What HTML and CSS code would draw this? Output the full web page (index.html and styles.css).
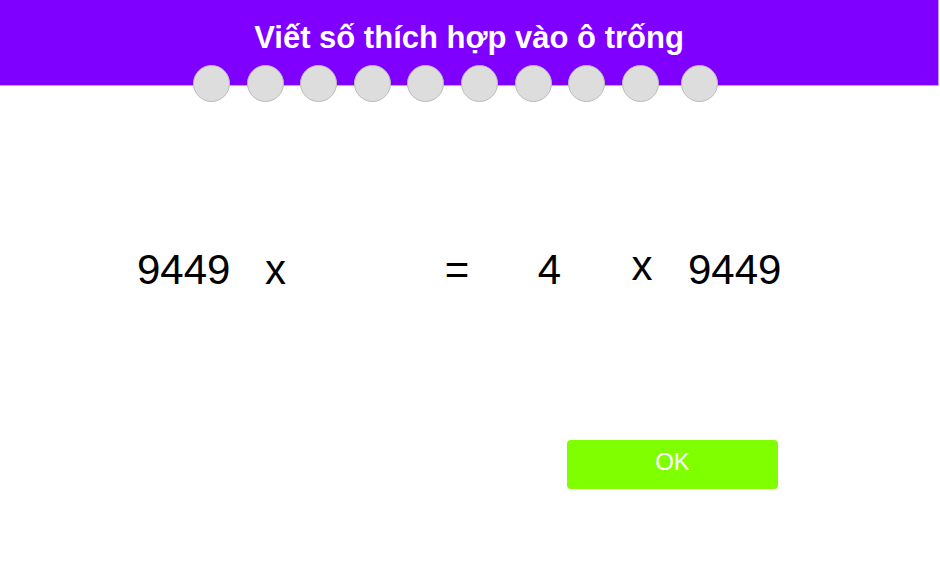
FILE: index.html
```html
<!DOCTYPE html>
<html lang="vi">
<head>
<meta charset="utf-8">
<title>Viết số thích hợp vào ô trống</title>
<link rel="stylesheet" href="styles.css">
</head>
<body>
  <header class="top">
    <h1 class="title">Viết số thích hợp vào ô trống</h1>
    <div class="dots">
      <span class="dot"></span>
      <span class="dot"></span>
      <span class="dot"></span>
      <span class="dot"></span>
      <span class="dot"></span>
      <span class="dot"></span>
      <span class="dot"></span>
      <span class="dot"></span>
      <span class="dot"></span>
      <span class="dot dot-last"></span>
    </div>
  </header>
  <main class="content">
    <div class="equation">
      <span class="cell">9449</span>
      <span class="cell">x</span>
      <span class="cell blank"></span>
      <span class="cell">=</span>
      <span class="cell">4</span>
      <span class="cell raised">x</span>
      <span class="cell">9449</span>
    </div>
    <div class="actions">
      <button class="ok" type="button">OK</button>
    </div>
  </main>
</body>
</html>
```
FILE: styles.css
```css
html, body {
  margin: 0;
  padding: 0;
  background: #ffffff;
  font-family: "Liberation Sans", Arial, sans-serif;
}

.top {
  width: 938px;
  height: 85px;
  background: #8000ff;
  border-right: 1px solid #c99cff;
  border-bottom: 1px solid #c99cff;
  display: flex;
  flex-direction: column;
}

.title {
  flex: none;
  margin: 0;
  padding-top: 20px;
  height: 45px;
  line-height: 36px;
  font-size: 31px;
  font-weight: bold;
  color: #ffffff;
  text-align: center;
}

.dots {
  flex: none;
  display: flex;
  gap: 16.6px;
  padding-left: 193px;
}

.dot {
  width: 37px;
  height: 37px;
  box-sizing: border-box;
  border-radius: 50%;
  background: #dddddd;
  border: 1.5px solid #bcbcbc;
  flex: none;
}

.dot-last {
  margin-left: 5.4px;
}

.content {
  display: flex;
  flex-direction: column;
}

.equation {
  margin-top: 160px;
  padding-left: 137px;
  display: grid;
  grid-template-columns: 93px 91px 90px 92px 93px 92px 93px;
  font-size: 42px;
  line-height: 48px;
  color: #000000;
}

.cell {
  text-align: center;
}

.raised {
  margin-top: -4px;
}

.actions {
  margin-top: 146px;
  padding-left: 567px;
  display: flex;
}

.ok {
  width: 211px;
  height: 49px;
  border: none;
  border-radius: 4px;
  background: #80ff00;
  color: #ffffff;
  font-family: "Liberation Sans", Arial, sans-serif;
  font-size: 24px;
  line-height: 28px;
  padding: 0 0 6px 0;
  cursor: pointer;
}
```
